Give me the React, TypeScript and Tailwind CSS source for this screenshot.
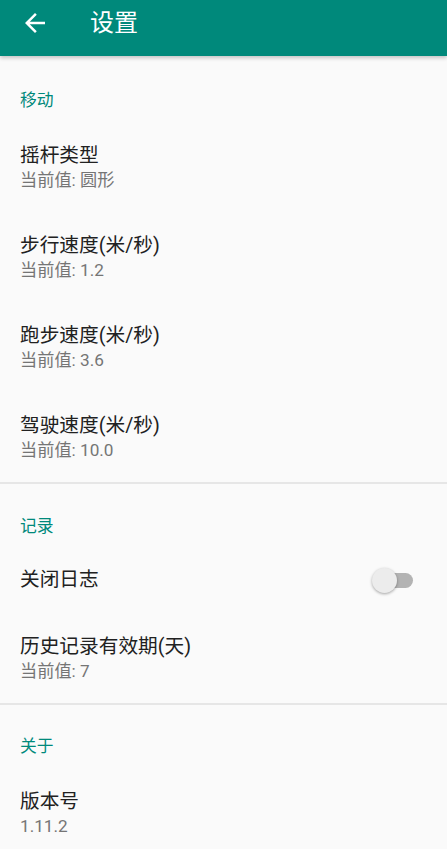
import React from "react";

const font = { fontFamily: '"Roboto", "Noto Sans CJK SC", sans-serif' };

function Category({ label, h, pb }: { label: string; h: string; pb: string }) {
  return (
    <div className={`flex items-end pl-[20px] ${h} ${pb}`}>
      <span className="text-[16.8px] leading-[20px] text-[#00897b]">{label}</span>
    </div>
  );
}

function Item({ title, sub }: { title: string; sub: string }) {
  return (
    <div className="flex h-[90px] flex-col justify-center pl-[20px] pt-[2px]">
      <div className="text-[19.7px] leading-[24px] text-[#212121]">{title}</div>
      <div className="text-[17.2px] leading-[25px] text-[#757575]">{sub}</div>
    </div>
  );
}

function Divider() {
  return <div className="h-[2px] bg-[#e6e6e6]" />;
}

export default function App() {
  return (
    <div className="min-h-[849px] w-full bg-[#fafafa]" style={font}>
      <header className="relative z-10 flex h-[56px] items-center bg-[#00897b] pb-[11px] shadow-[0_2px_4px_rgba(0,0,0,0.22)]">
        <svg
          className="ml-[20px] h-[30px] w-[30px]"
          viewBox="0 0 24 24"
          fill="#ffffff"
        >
          <path d="M20 11H7.83l5.59-5.59L12 4l-8 8 8 8 1.41-1.41L7.83 13H20v-2z" />
        </svg>
        <h1 className="ml-[40px] text-[24px] font-normal leading-[30px] text-white">设置</h1>
      </header>

      <Category label="移动" h="h-[66px]" pb="pb-[12px]" />
      <Item title="摇杆类型" sub="当前值: 圆形" />
      <Item title="步行速度(米/秒)" sub="当前值: 1.2" />
      <Item title="跑步速度(米/秒)" sub="当前值: 3.6" />
      <Item title="驾驶速度(米/秒)" sub="当前值: 10.0" />
      <Divider />

      <Category label="记录" h="h-[63px]" pb="pb-[11px]" />
      <div className="flex h-[66px] items-center justify-between pl-[20px] pr-[34px]">
        <span className="text-[19.7px] leading-[24px] text-[#212121]">关闭日志</span>
        <div className="relative h-[24px] w-[41px]">
          <div className="absolute left-[7px] top-[5px] h-[15px] w-[34px] rounded-full bg-[#b3b3b3]" />
          <div className="absolute left-0 top-0 h-[25px] w-[25px] rounded-full bg-[#ececec] shadow-[0_1px_3px_rgba(0,0,0,0.35)]" />
        </div>
      </div>
      <Item title="历史记录有效期(天)" sub="当前值: 7" />
      <Divider />

      <Category label="关于" h="h-[63px]" pb="pb-[12px]" />
      <Item title="版本号" sub="1.11.2" />
    </div>
  );
}
